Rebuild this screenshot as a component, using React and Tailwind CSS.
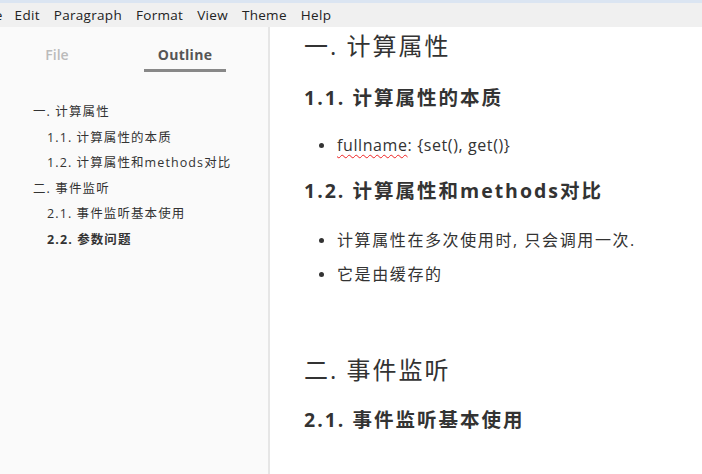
export default function App() {
  const font = { fontFamily: '"Open Sans", "Noto Sans CJK SC", sans-serif' };
  return (
    <div className="w-[702px] h-[474px] overflow-hidden flex flex-col bg-white text-[#333]" style={font}>
      <div className="h-[27px] shrink-0 flex items-center bg-[#f0f0f0] border-t-[3px] border-[#dbe5f2] text-[13.5px] tracking-[0.3px] text-[#222] overflow-hidden">
        <span className="ml-[-20px] mr-[12px]">File</span>
        <span className="mr-[14px]">Edit</span>
        <span className="mr-[14px]">Paragraph</span>
        <span className="mr-[14px]">Format</span>
        <span className="mr-[14px]">View</span>
        <span className="mr-[14px]">Theme</span>
        <span>Help</span>
      </div>
      <div className="flex flex-1 min-h-0">
        <div className="w-[270px] shrink-0 bg-[#fafafa] border-r-2 border-[#e6e6e6] flex flex-col">
          <div className="flex mt-[17px] h-[31px]">
            <div className="w-[114px] text-center text-[14px] text-[#bbb] font-semibold">File</div>
            <div className="w-[82px] ml-[30px] flex flex-col items-center">
              <span className="text-[14px] font-bold tracking-[0.3px] text-[#555]">Outline</span>
              <div className="mt-[4px] h-[3px] w-[82px] bg-[#888]"></div>
            </div>
          </div>
          <div className="mt-[24px] flex flex-col text-[12.5px] tracking-[1.1px] leading-[25.6px] text-[#333]">
            <div className="pl-[33px]">一. 计算属性</div>
            <div className="pl-[47px]">1.1. 计算属性的本质</div>
            <div className="pl-[47px]">1.2. 计算属性和methods对比</div>
            <div className="pl-[33px]">二. 事件监听</div>
            <div className="pl-[47px]">2.1. 事件监听基本使用</div>
            <div className="pl-[47px] font-bold">2.2. 参数问题</div>
          </div>
        </div>
        <div className="flex-1 pl-[34px] flex flex-col">
          <div className="mt-[4px] text-[24px] tracking-[2px] leading-[30px]">一. 计算属性</div>
          <div className="mt-[24px] text-[19.5px] tracking-[2px] leading-[26px] font-bold">1.1. 计算属性的本质</div>
          <ul className="mt-[22px] text-[16px] leading-[24px]">
            <li className="flex items-center">
              <span className="w-[5px] h-[5px] rounded-full bg-[#333] ml-[15px] mr-[13px]"></span>
              <span className="tracking-[0.6px]"><span className="underline decoration-wavy decoration-[#e22] decoration-1 underline-offset-[3px]">fullname</span>: {"{set(), get()}"}</span>
            </li>
          </ul>
          <div className="mt-[21px] text-[19.5px] tracking-[2px] leading-[26px] font-bold">1.2. 计算属性和methods对比</div>
          <ul className="mt-[24px] text-[16px] leading-[24px] flex flex-col gap-[10px]">
            <li className="flex items-center">
              <span className="w-[5px] h-[5px] rounded-full bg-[#333] ml-[15px] mr-[13px]"></span>
              <span className="tracking-[1.6px]">计算属性在多次使用时, 只会调用一次.</span>
            </li>
            <li className="flex items-center">
              <span className="w-[5px] h-[5px] rounded-full bg-[#333] ml-[15px] mr-[13px]"></span>
              <span className="tracking-[1.6px]">它是由缓存的</span>
            </li>
          </ul>
          <div className="mt-[69px] text-[24px] tracking-[2px] leading-[30px]">二. 事件监听</div>
          <div className="mt-[22px] text-[19.5px] tracking-[2px] leading-[26px] font-bold">2.1. 事件监听基本使用</div>
        </div>
      </div>
    </div>
  );
}
